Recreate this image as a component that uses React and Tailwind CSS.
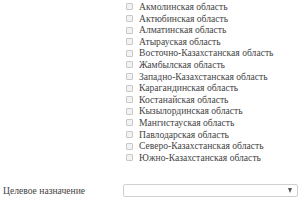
import React from 'react';

const REGIONS = [
    'Акмолинская область',
    'Актюбинская область',
    'Алматинская область',
    'Атырауская область',
    'Восточно-Казахстанская область',
    'Жамбылская область',
    'Западно-Казахстанская область',
    'Карагандинская область',
    'Костанайская область',
    'Кызылординская область',
    'Мангистауская область',
    'Павлодарская область',
    'Северо-Казахстанская область',
    'Южно-Казахстанская область',
];

const Box = () => (
    <span className="block w-[7px] h-[7px] border border-[#c8c8c8] bg-[#f3f3f3] rounded-[1px] shrink-0" />
);

const App = () => {
    return (
        <div className="w-[300px] h-[200px] overflow-hidden bg-white text-[#444] font-['Liberation_Serif','Times_New_Roman',serif]">
            {/* Регионы */}
            <div className="flex">
                <div className="w-[126px] shrink-0" />
                <div className="-mt-[10.5px]">
                    {/* предыдущий пункт, срезан краем */}
                    <div className="flex items-center h-[11.6px]">
                        <Box />
                    </div>
                    {REGIONS.map(name => (
                        <label key={name} className="flex items-center gap-[6px] h-[11.6px] text-[9.6px] leading-none whitespace-nowrap">
                            <Box />
                            <span>{name}</span>
                        </label>
                    ))}
                </div>
            </div>

            {/* Целевое назначение */}
            <div className="flex items-center mt-[21px] h-[13px]">
                <span className="w-[123px] shrink-0 pl-[3px] text-[9.6px] leading-none whitespace-nowrap">
                    Целевое назначение
                </span>
                <div className="w-[175px] h-[13px] border border-[#cfcfcf] rounded-[2px] bg-white flex items-center justify-end pr-[5px]">
                    <svg width="4" height="5" viewBox="0 0 4 5">
                        <path d="M0 0H4L2 5Z" fill="#555" />
                    </svg>
                </div>
            </div>
        </div>
    );
};

export default App;
